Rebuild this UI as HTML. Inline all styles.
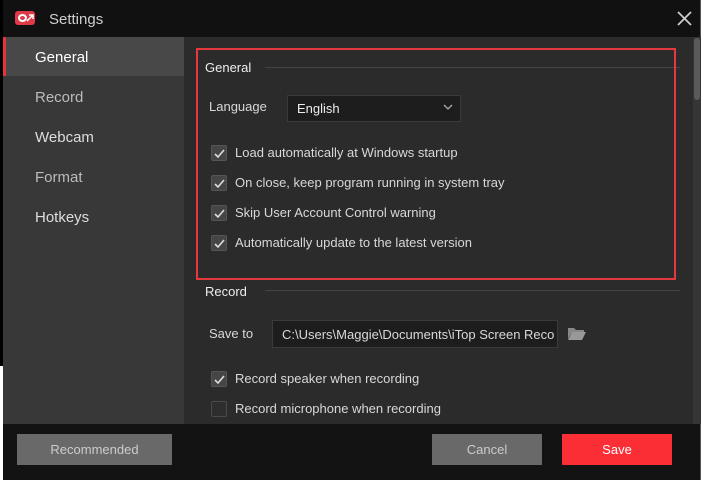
<!DOCTYPE html>
<html><head><meta charset="utf-8"><style>
*{margin:0;padding:0;box-sizing:border-box}
body{width:703px;height:481px;background:#fff;position:relative;overflow:hidden;font-family:"Liberation Sans",sans-serif;}
.a{position:absolute}
.t{color:#d8d8d8;font-size:14px;white-space:nowrap}
.cb{position:absolute;width:16px;height:16px;background:#454545;border:1px solid #555;border-radius:2px}
.cb svg{position:absolute;left:2px;top:2px}
</style></head><body>
<div class="a" style="left:0;top:0;width:3px;height:366px;background:#000"></div>
<div class="a" style="left:3px;top:0;width:698px;height:480px;background:#2b2b2b;border-right:1px solid #555"></div>
<!-- title -->
<div class="a" style="left:3px;top:0;width:697px;height:37px;background:#121112"></div>
<div class="a" style="left:15px;top:11px;width:20px;height:14px;background:#e03a48;border-radius:3px"></div>
<div class="a" style="left:18px;top:14px;width:9px;height:8px;border:2px solid #fff;border-radius:50%"></div>
<svg class="a" style="left:26px;top:13px" width="12" height="10"><path d="M1 8L6 3M3 2h4v4" stroke="#fff" stroke-width="1.5" fill="none"/></svg>
<div class="a t" style="left:49px;top:11px;font-size:15px;color:#cfcfcf">Settings</div>
<svg class="a" style="left:677px;top:11px" width="15" height="15"><path d="M1 1L14 14M14 1L1 14" stroke="#ccc" stroke-width="1.8"/></svg>
<!-- sidebar -->
<div class="a" style="left:3px;top:37px;width:181px;height:387px;background:#383838"></div>
<div class="a" style="left:3px;top:37px;width:181px;height:39px;background:#484848;border-left:3px solid #e5343d"></div>
<div class="a t" style="left:35px;top:49px;font-size:15px;color:#fff">General</div>
<div class="a t" style="left:35px;top:89px;font-size:15px;color:#bbb">Record</div>
<div class="a t" style="left:35px;top:129px;font-size:15px;color:#ddd">Webcam</div>
<div class="a t" style="left:35px;top:169px;font-size:15px;color:#bbb">Format</div>
<div class="a t" style="left:35px;top:209px;font-size:15px;color:#ddd">Hotkeys</div>
<!-- scrollbar -->
<div class="a" style="left:693px;top:37px;width:8px;height:387px;background:#353535"></div>
<div class="a" style="left:694px;top:38px;width:6px;height:62px;background:#5a5a5a;border-radius:3px"></div>
<!-- content -->
<div class="a t" style="left:205px;top:60px;font-size:13px;color:#eee">General</div>
<div class="a" style="left:265px;top:67px;width:415px;height:1px;background:#444"></div>
<div class="a t" style="left:209px;top:99px;font-size:13px">Language</div>
<div class="a" style="left:287px;top:95px;width:174px;height:27px;background:#1d1d1d;border:1px solid #3a3a3a"></div>
<div class="a t" style="left:297px;top:101px;font-size:13px;color:#eee">English</div>
<svg class="a" style="left:443px;top:104px" width="10" height="7"><path d="M1 1L5 5L9 1" stroke="#aaa" stroke-width="1.3" fill="none"/></svg>
<div class="cb" style="left:211px;top:145px"><svg width="11" height="11"><path d="M1 6L4 9L10 2" stroke="#ddd" stroke-width="1.6" fill="none"/></svg></div>
<div class="a t" style="left:235px;top:145px;font-size:13px">Load automatically at Windows startup</div>
<div class="cb" style="left:211px;top:175px"><svg width="11" height="11"><path d="M1 6L4 9L10 2" stroke="#ddd" stroke-width="1.6" fill="none"/></svg></div>
<div class="a t" style="left:235px;top:175px;font-size:13px">On close, keep program running in system tray</div>
<div class="cb" style="left:211px;top:205px"><svg width="11" height="11"><path d="M1 6L4 9L10 2" stroke="#ddd" stroke-width="1.6" fill="none"/></svg></div>
<div class="a t" style="left:235px;top:205px;font-size:13px">Skip User Account Control warning</div>
<div class="cb" style="left:211px;top:235px"><svg width="11" height="11"><path d="M1 6L4 9L10 2" stroke="#ddd" stroke-width="1.6" fill="none"/></svg></div>
<div class="a t" style="left:235px;top:235px;font-size:13px">Automatically update to the latest version</div>
<div class="a" style="left:196px;top:48px;width:480px;height:232px;border:2px solid #e5393f"></div>
<div class="a t" style="left:205px;top:284px;font-size:13px;color:#eee">Record</div>
<div class="a" style="left:265px;top:290px;width:415px;height:1px;background:#444"></div>
<div class="a t" style="left:209px;top:326px;font-size:13px">Save to</div>
<div class="a" style="left:272px;top:320px;width:286px;height:28px;background:#1d1d1d;border:1px solid #3a3a3a;overflow:hidden"></div>
<div class="a t" style="left:282px;top:327px;font-size:13px;width:272px;overflow:hidden">C:\Users\Maggie\Documents\iTop Screen Recorder</div>
<svg class="a" style="left:568px;top:326px" width="18" height="15"><path d="M0 2h6l2 2h8v2H4L0 13Z" fill="#888"/><path d="M4 6h14l-4 8H0Z" fill="#999"/></svg>
<div class="cb" style="left:211px;top:371px"><svg width="11" height="11"><path d="M1 6L4 9L10 2" stroke="#ddd" stroke-width="1.6" fill="none"/></svg></div>
<div class="a t" style="left:235px;top:371px;font-size:13px">Record speaker when recording</div>
<div class="cb" style="left:211px;top:401px;background:#2e2e2e;border-color:#4a4a4a"></div>
<div class="a t" style="left:235px;top:401px;font-size:13px">Record microphone when recording</div>
<!-- footer -->
<div class="a" style="left:3px;top:424px;width:697px;height:56px;background:#141314"></div>
<div class="a" style="left:17px;top:434px;width:155px;height:31px;background:#696969;color:#ccc;font-size:13px;text-align:center;line-height:31px">Recommended</div>
<div class="a" style="left:432px;top:434px;width:110px;height:31px;background:#696969;color:#ccc;font-size:13px;text-align:center;line-height:31px">Cancel</div>
<div class="a" style="left:562px;top:434px;width:110px;height:31px;background:#fb2d35;color:#fff;font-size:13px;text-align:center;line-height:31px">Save</div>
</body></html>
